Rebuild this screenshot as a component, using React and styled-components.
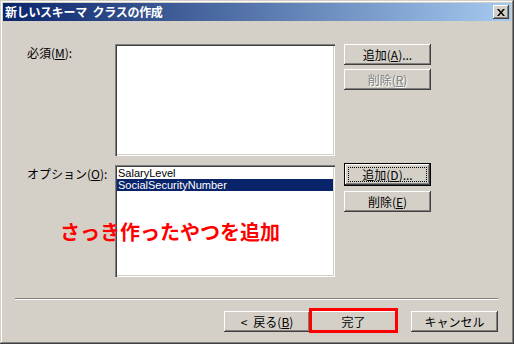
import { createGlobalStyle, styled } from "styled-components";

const GlobalStyle = createGlobalStyle`
  html, body {
    margin: 0;
    padding: 0;
    background: #d4d0c8;
  }
`;

const Window = styled.div`
  position: relative;
  display: flex;
  flex-direction: column;
  width: 514px;
  height: 344px;
  box-sizing: border-box;
  padding: 3px;
  background: #d4d0c8;
  box-shadow: inset -1px -1px #404040, inset 1px 1px #d4d0c8,
    inset -2px -2px #808080, inset 2px 2px #ffffff;
  font-family: "Noto Sans CJK JP", "Liberation Sans", sans-serif;
  font-size: 12px;
  color: #000;
`;

const TitleBar = styled.div`
  display: flex;
  align-items: center;
  justify-content: space-between;
  height: 18px;
  padding: 0 2px 0 2px;
  background: linear-gradient(to right, #0a246a, #a6caf0);
`;

const Title = styled.span`
  color: #fff;
  font-weight: 700;
  font-size: 12px;
  line-height: 18px;
  letter-spacing: -0.3px;
  white-space: pre;
`;

const CloseButton = styled.div`
  display: flex;
  align-items: center;
  justify-content: center;
  width: 16px;
  height: 14px;
  box-sizing: border-box;
  background: #d4d0c8;
  box-shadow: inset -1px -1px #404040, inset 1px 1px #ffffff,
    inset -2px -2px #808080;
`;

const Fields = styled.div`
  display: flex;
  flex-direction: column;
  gap: 9px;
  padding: 23px 0 0 24px;
`;

const Row = styled.div`
  display: grid;
  grid-template-columns: 88px 220px 96px;
`;

const Label = styled.div`
  padding-top: 1px;
  line-height: 16px;
  font-size: 12px;
`;

const Key = styled.span`
  text-decoration: underline;
  text-underline-offset: 1px;
`;

const ListBox = styled.div`
  height: 112px;
  box-sizing: border-box;
  padding: 2px;
  background: #fff;
  box-shadow: inset 1px 1px #808080, inset 2px 2px #404040,
    inset -1px -1px #ffffff, inset -2px -2px #d4d0c8;
`;

const Item = styled.div`
  height: 12px;
  padding-left: 1px;
  font-family: "Liberation Sans", "DejaVu Sans", sans-serif;
  font-size: 11px;
  line-height: 12px;
  color: ${(p) => (p.$selected ? "#fff" : "#000")};
  background: ${(p) => (p.$selected ? "#0a246a" : "transparent")};
`;

const Buttons = styled.div`
  display: flex;
  flex-direction: column;
  gap: ${(p) => p.$gap || 4}px;
  margin-left: 9px;
  margin-top: ${(p) => p.$shift || 0}px;
  width: 87px;
`;

const Button = styled.div`
  position: relative;
  display: flex;
  align-items: center;
  justify-content: center;
  width: ${(p) => p.$width || 87}px;
  height: ${(p) => p.$height || 21}px;
  box-sizing: border-box;
  background: #d4d0c8;
  font-size: 12px;
  line-height: 14px;
  white-space: pre;
  color: ${(p) => (p.$disabled ? "#808080" : "#000")};
  text-shadow: ${(p) => (p.$disabled ? "1px 1px #fff" : "none")};
  box-shadow: ${(p) =>
    p.$default
      ? "inset 0 0 0 1px #000, inset -2px -2px #404040, inset 2px 2px #ffffff, inset -3px -3px #808080"
      : "inset -1px -1px #404040, inset 1px 1px #ffffff, inset -2px -2px #808080"};
`;

const Focus = styled.span`
  position: absolute;
  inset: 4px;
  border: 1px dotted #000;
`;

const ButtonText = styled.span`
  position: relative;
`;

const Separator = styled.div`
  margin: 21px 13px 0 12px;
  height: 2px;
  box-shadow: inset 0 1px #808080, inset 0 -1px #ffffff;
`;

const Footer = styled.div`
  display: flex;
  justify-content: flex-end;
  align-items: center;
  padding: 11px 13px 0 0;
`;

const BackGroup = styled.div`
  display: flex;
  margin-right: 14px;
`;

const Marked = styled.div`
  position: relative;
  &::after {
    content: "";
    position: absolute;
    left: -1px;
    right: -1px;
    top: -3px;
    bottom: -1px;
    border: 3px solid #ff0000;
  }
`;

const Note = styled.div`
  position: absolute;
  left: 60px;
  top: 220px;
  color: #ff0000;
  font-size: 20px;
  font-weight: 700;
  line-height: 24px;
  white-space: nowrap;
`;

const App = () => {
  return (
    <>
      <GlobalStyle />
      <Window>
        <TitleBar>
          <Title>新しいスキーマ&ensp;クラスの作成</Title>
          <CloseButton>
            <svg width="8" height="7" viewBox="0 0 8 7">
              <path d="M0 0h2l2 2.5L6 0h2L5 3.5 8 7H6L4 4.5 2 7H0l3-3.5z" fill="#000" />
            </svg>
          </CloseButton>
        </TitleBar>
        <Fields>
          <Row>
            <Label>
              必須(<Key>M</Key>):
            </Label>
            <ListBox />
            <Buttons>
              <Button>
                <ButtonText>
                  追加(<Key>A</Key>)...
                </ButtonText>
              </Button>
              <Button $disabled>
                <ButtonText>
                  削除(<Key>R</Key>)
                </ButtonText>
              </Button>
            </Buttons>
          </Row>
          <Row>
            <Label>
              オプション(<Key>O</Key>):
            </Label>
            <ListBox>
              <Item>SalaryLevel</Item>
              <Item $selected>SocialSecurityNumber</Item>
            </ListBox>
            <Buttons $shift={-2} $gap={5}>
              <Button $default $height={23}>
                <Focus />
                <ButtonText>
                  追加(<Key>D</Key>)...
                </ButtonText>
              </Button>
              <Button>
                <ButtonText>
                  削除(<Key>E</Key>)
                </ButtonText>
              </Button>
            </Buttons>
          </Row>
        </Fields>
        <Separator />
        <Footer>
          <BackGroup>
            <Button $width={86}>
              <ButtonText>
                &lt;&ensp;戻る(<Key>B</Key>)
              </ButtonText>
            </Button>
            <Marked>
              <Button>
                <ButtonText>完了</ButtonText>
              </Button>
            </Marked>
          </BackGroup>
          <Button>
            <ButtonText>キャンセル</ButtonText>
          </Button>
        </Footer>
        <Note>さっき作ったやつを追加</Note>
      </Window>
    </>
  );
};

export default App;
